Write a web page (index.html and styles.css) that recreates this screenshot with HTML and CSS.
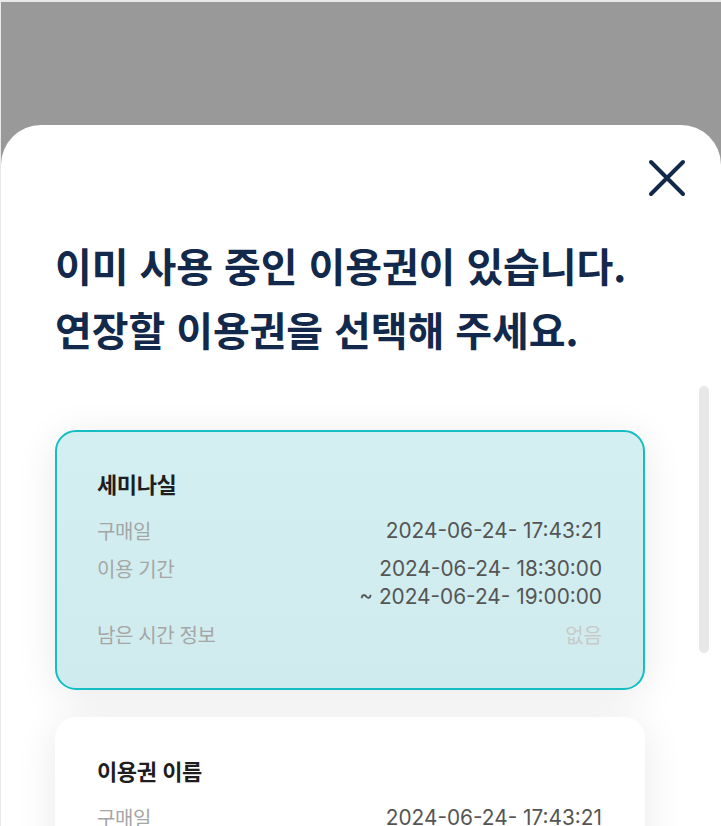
FILE: index.html
```html
<!DOCTYPE html>
<html lang="ko">
<head>
<meta charset="utf-8">
<title>이용권 연장</title>
<link rel="stylesheet" href="styles.css">
</head>
<body>
<div class="backdrop">
  <div class="sheet">
    <div class="sheet-head">
      <button class="close" aria-label="닫기">
        <svg width="40" height="40" viewBox="0 0 40 40"><path d="M4 4 L36 36 M36 4 L4 36" stroke="#13294b" stroke-width="4" stroke-linecap="round" fill="none"/></svg>
      </button>
    </div>
    <h1 class="title">이미 사용 중인 이용권이 있습니다.<br>연장할 이용권을 선택해 주세요.</h1>
    <div class="content">
      <div class="list">
        <div class="card selected">
          <div class="card-title">세미나실</div>
          <div class="row"><span class="label">구매일</span><span class="value">2024-06-24- 17:43:21</span></div>
          <div class="row"><span class="label">이용 기간</span><span class="value">2024-06-24- 18:30:00<br>~ 2024-06-24- 19:00:00</span></div>
          <div class="row"><span class="label">남은 시간 정보</span><span class="value muted">없음</span></div>
        </div>
        <div class="card">
          <div class="card-title">이용권 이름</div>
          <div class="row"><span class="label">구매일</span><span class="value">2024-06-24- 17:43:21</span></div>
          <div class="row"><span class="label">이용 기간</span><span class="value">2024-06-24- 18:30:00<br>~ 2024-06-24- 19:00:00</span></div>
        </div>
      </div>
      <div class="scrollbar"></div>
    </div>
  </div>
</div>
</body>
</html>
```
FILE: styles.css
```css
html {
  background: #e9e9e9;
}
body {
  margin: 0;
  height: 826px;
  overflow: hidden;
  font-family: Inter, "Noto Sans CJK KR", sans-serif;
}
.backdrop {
  margin: 2px 0 0 1px;
  background: #999999;
  height: 824px;
  padding-top: 123px;
  box-sizing: border-box;
}
.sheet {
  background: #ffffff;
  border-radius: 40px 40px 0 0;
  height: 800px;
}
.sheet-head {
  display: flex;
  justify-content: flex-end;
  padding: 33px 34px 0 0;
}
.close {
  border: 0;
  background: none;
  padding: 0;
  width: 40px;
  height: 40px;
  display: block;
}
.close svg {
  display: block;
}
.title {
  margin: 35px 0 0 0;
  padding-left: 54px;
  font-family: "Noto Sans CJK KR", sans-serif;
  font-size: 40px;
  font-weight: 700;
  line-height: 64px;
  letter-spacing: -0.1px;
  color: #13294b;
}
.content {
  display: flex;
  justify-content: space-between;
  align-items: flex-start;
}
.list {
  width: 590px;
  margin-left: 54px;
  padding-top: 69px;
  display: flex;
  flex-direction: column;
  gap: 27px;
}
.scrollbar {
  width: 10px;
  height: 267px;
  margin: 25px 12px 0 0;
  border-radius: 5px;
  background: #e8e8ea;
}
.card {
  border: 2px solid transparent;
  border-radius: 21px;
  background: #ffffff;
  padding: 37px 41px 39px 40px;
  box-shadow: 0 6px 40px rgba(0, 0, 0, 0.09);
  display: flex;
  flex-direction: column;
  gap: 10px;
}
.card.selected {
  border-color: #14bec3;
  background: linear-gradient(180deg, #d3eff1 0%, #cfebed 100%);
}
.card-title {
  font-family: "Noto Sans CJK KR", sans-serif;
  font-size: 22px;
  font-weight: 700;
  line-height: 28px;
  letter-spacing: -0.4px;
  color: #1e1e1e;
  margin-bottom: 10px;
}
.row {
  display: flex;
  justify-content: space-between;
  align-items: flex-start;
  font-size: 20.8px;
  line-height: 28px;
}
.label {
  font-family: "Noto Sans CJK KR", sans-serif;
  color: #a6a6a6;
  letter-spacing: -0.4px;
  font-size: 20px;
}
.value {
  color: #555555;
  text-align: right;
}
.value.muted {
  font-family: "Noto Sans CJK KR", sans-serif;
  color: #c9c9c9;
  font-size: 20px;
}
```
